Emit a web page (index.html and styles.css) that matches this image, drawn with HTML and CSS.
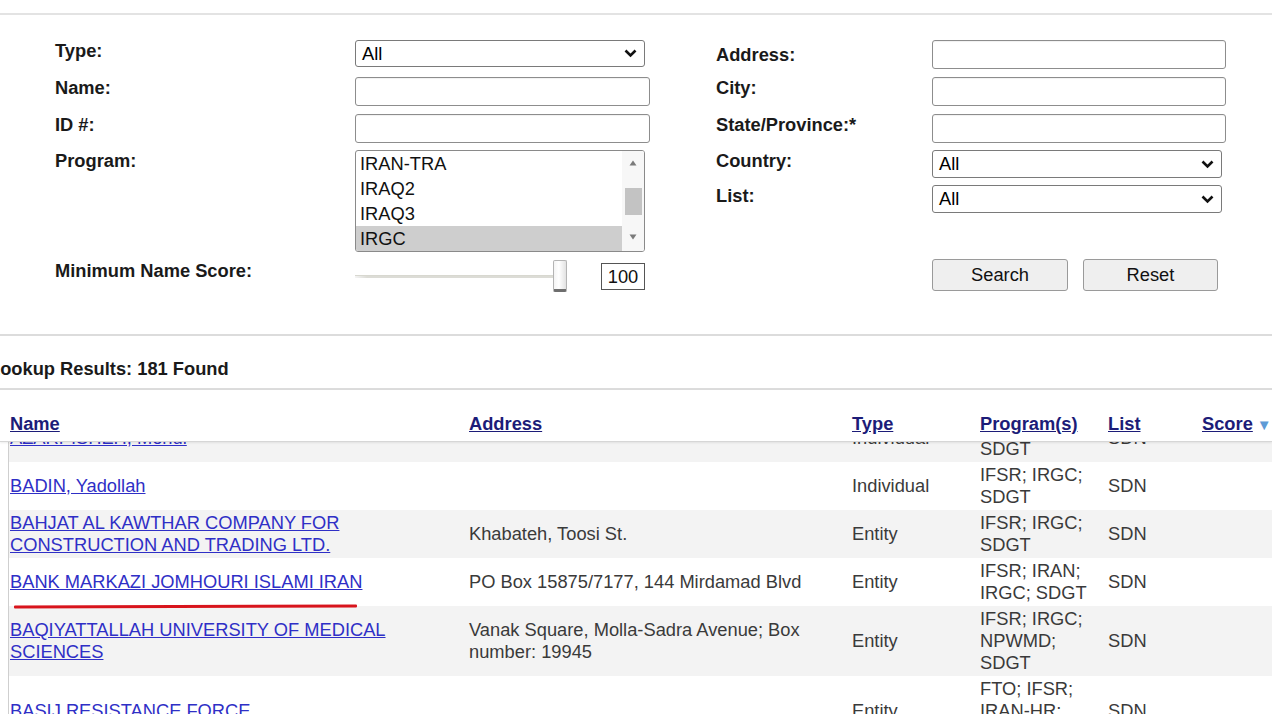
FILE: index.html
```html
<!DOCTYPE html>
<html lang="en">
<head>
<meta charset="utf-8">
<title>Sanctions List Search</title>
<link rel="stylesheet" href="styles.css">
</head>
<body>
<div class="topbar"></div>

<form class="search">
  <div class="col col-left">
    <label class="lbl">Type:</label>
    <div class="select sel-type"><span>All</span><svg class="chev" width="13" height="9" viewBox="0 0 13 9"><polyline points="1.5,1.5 6.5,6.5 11.5,1.5" fill="none" stroke="#111" stroke-width="2.6"/></svg></div>

    <label class="lbl">Name:</label>
    <div class="input"></div>

    <label class="lbl">ID #:</label>
    <div class="input"></div>

    <label class="lbl">Program:</label>
    <div class="listbox">
      <div class="options">
        <div class="opt">IRAN-TRA</div>
        <div class="opt">IRAQ2</div>
        <div class="opt">IRAQ3</div>
        <div class="opt selected">IRGC</div>
      </div>
      <div class="scrollbar">
        <svg class="arrow" width="8" height="6" viewBox="0 0 8 6"><polygon points="4,0.5 7.5,5.5 0.5,5.5" fill="#7b7b7b"/></svg>
        <div class="thumb"></div>
        <svg class="arrow" width="8" height="6" viewBox="0 0 8 6"><polygon points="0.5,0.5 7.5,0.5 4,5.5" fill="#7b7b7b"/></svg>
      </div>
    </div>

    <label class="lbl">Minimum Name Score:</label>
    <div class="score-row">
      <div class="slider">
        <div class="track"></div>
        <div class="knob"></div>
      </div>
      <div class="numbox">100</div>
    </div>
  </div>

  <div class="col col-right">
    <label class="lbl lbl-first">Address:</label>
    <div class="input"></div>

    <label class="lbl">City:</label>
    <div class="input"></div>

    <label class="lbl">State/Province:*</label>
    <div class="input"></div>

    <label class="lbl">Country:</label>
    <div class="select sel-wide"><span>All</span><svg class="chev" width="13" height="9" viewBox="0 0 13 9"><polyline points="1.5,1.5 6.5,6.5 11.5,1.5" fill="none" stroke="#111" stroke-width="2.6"/></svg></div>

    <label class="lbl">List:</label>
    <div class="select sel-wide"><span>All</span><svg class="chev" width="13" height="9" viewBox="0 0 13 9"><polyline points="1.5,1.5 6.5,6.5 11.5,1.5" fill="none" stroke="#111" stroke-width="2.6"/></svg></div>

    <div class="spacer"></div>
    <div></div>

    <div class="buttons">
      <button type="button" class="btn btn-search">Search</button>
      <button type="button" class="btn btn-reset">Reset</button>
    </div>
  </div>
</form>

<h2 class="results-title">Lookup Results: 181 Found</h2>

<div class="thead row-grid">
  <div class="cell"><a href="#">Name</a></div>
  <div class="cell"><a href="#">Address</a></div>
  <div class="cell"><a href="#">Type</a></div>
  <div class="cell"><a href="#">Program(s)</a></div>
  <div class="cell"><a href="#">List</a></div>
  <div class="cell score-head"><a href="#">Score</a><span class="sort">&#9660;</span></div>
</div>

<div class="tbody">
  <div class="rows">
    <div class="row row-grid alt">
      <div class="cell name"><a href="#">AZARPISHEH, Mehdi</a></div>
      <div class="cell addr"></div>
      <div class="cell">Individual</div>
      <div class="cell prog">IFSR; IRGC; SDGT</div>
      <div class="cell">SDN</div>
      <div class="cell"></div>
    </div>
    <div class="row row-grid">
      <div class="cell name"><a href="#">BADIN, Yadollah</a></div>
      <div class="cell addr"></div>
      <div class="cell">Individual</div>
      <div class="cell prog">IFSR; IRGC; SDGT</div>
      <div class="cell">SDN</div>
      <div class="cell"></div>
    </div>
    <div class="row row-grid alt">
      <div class="cell name"><a href="#">BAHJAT AL KAWTHAR COMPANY FOR CONSTRUCTION AND TRADING LTD.</a></div>
      <div class="cell addr">Khabateh, Toosi St.</div>
      <div class="cell">Entity</div>
      <div class="cell prog">IFSR; IRGC; SDGT</div>
      <div class="cell">SDN</div>
      <div class="cell"></div>
    </div>
    <div class="row row-grid">
      <div class="cell name marked"><a href="#">BANK MARKAZI JOMHOURI ISLAMI IRAN</a><span class="redline"></span></div>
      <div class="cell addr">PO Box 15875/7177, 144 Mirdamad Blvd</div>
      <div class="cell">Entity</div>
      <div class="cell prog">IFSR; IRAN; IRGC; SDGT</div>
      <div class="cell">SDN</div>
      <div class="cell"></div>
    </div>
    <div class="row row-grid alt">
      <div class="cell name"><a href="#">BAQIYATTALLAH UNIVERSITY OF MEDICAL SCIENCES</a></div>
      <div class="cell addr">Vanak Square, Molla-Sadra Avenue; Box number: 19945</div>
      <div class="cell">Entity</div>
      <div class="cell prog">IFSR; IRGC; NPWMD; SDGT</div>
      <div class="cell">SDN</div>
      <div class="cell"></div>
    </div>
    <div class="row row-grid">
      <div class="cell name"><a href="#">BASIJ RESISTANCE FORCE</a></div>
      <div class="cell addr"></div>
      <div class="cell">Entity</div>
      <div class="cell prog">FTO; IFSR; IRAN-HR; IRGC; SDGT</div>
      <div class="cell">SDN</div>
      <div class="cell"></div>
    </div>
  </div>
</div>
</body>
</html>
```

FILE: styles.css
```css
* { box-sizing: border-box; }

html, body {
  margin: 0;
  padding: 0;
  background: #fff;
  overflow: hidden;
}

body {
  width: 1272px;
  height: 714px;
  font-family: "Liberation Sans", Arial, sans-serif;
  font-size: 18.3px;
  line-height: 22px;
  color: #222;
}

.topbar {
  height: 15px;
  border-bottom: 2px solid #e3e3e3;
}

/* ---------- search form ---------- */
.search {
  display: flex;
  height: 321px;
  padding: 25px 0 0 55px;
  border-bottom: 2px solid #dcdcdc;
}

.col {
  display: grid;
  row-gap: 8px;
  align-items: start;
}

.col-left {
  grid-template-columns: 300px 295px;
  grid-template-rows: 29px 29px 28px 102px 32px;
  width: 595px;
}

.col-right {
  margin-left: 66px;
  grid-template-columns: 216px 294px;
  grid-template-rows: 29px 29px 28px 27px 27px 31px 32px;
}

.lbl {
  font-weight: bold;
  color: #1a1a1a;
  line-height: 22px;
}

.lbl-first { margin-top: 4px; }

.spacer { height: 1px; }

.input {
  width: 295px;
  height: 29px;
  border: 1px solid #8d8d8d;
  border-radius: 3px;
  background: #fff;
  box-shadow: inset 0 1px 1px rgba(0,0,0,0.06);
}

.col-right .input { width: 294px; }

.select {
  display: flex;
  align-items: center;
  justify-content: space-between;
  height: 27px;
  padding: 0 7px 0 6px;
  border: 1px solid #7a7a7a;
  border-radius: 3px;
  background: #fff;
  color: #000;
}

.sel-type { width: 290px; }
.sel-wide { width: 290px; height: 28px; }

.chev { display: block; }

.listbox {
  display: flex;
  width: 290px;
  height: 102px;
  border: 1px solid #8a8a8a;
  border-radius: 3px;
  overflow: hidden;
  background: #fff;
}

.options {
  flex: 1;
}

.opt {
  height: 25px;
  line-height: 25px;
  padding-left: 4px;
  color: #111;
}

.opt.selected { background: #cecece; }

.scrollbar {
  width: 22px;
  display: flex;
  flex-direction: column;
  align-items: center;
  background: #f7f7f7;
  padding-top: 9px;
}

.scrollbar .arrow { display: block; }

.thumb {
  width: 17px;
  height: 27px;
  margin: 22px 0 19px;
  background: #c3c3c3;
}

.score-row {
  display: flex;
  align-items: center;
  height: 32px;
}

.slider {
  position: relative;
  width: 212px;
  height: 32px;
  display: flex;
  align-items: center;
}

.track {
  width: 205px;
  height: 3px;
  background: linear-gradient(to right, #f4f4f4, #dcdcd6 12px);
  border-top: 1px solid #d8d8d0;
}

.knob {
  position: absolute;
  left: 198px;
  top: 0;
  width: 14px;
  height: 32px;
  border: 1px solid #b4b4b4;
  border-bottom: 3px solid #6e6e6e;
  border-radius: 2px;
  background: linear-gradient(to right, #f4f4f4, #ffffff 40%, #e2e2e2);
}

.numbox {
  margin-left: 34px;
  width: 44px;
  height: 27px;
  border: 1px solid #555;
  text-align: center;
  line-height: 25px;
  color: #111;
}

.buttons {
  grid-column: 2;
  display: flex;
  gap: 15px;
}

.btn {
  font-family: inherit;
  font-size: 18.3px;
  color: #111;
  height: 32px;
  border: 1px solid #9a9a9a;
  border-radius: 3px;
  background: #efefef;
  padding: 0;
}

.btn-search { width: 136px; }
.btn-reset { width: 135px; }

/* ---------- results ---------- */
.results-title {
  margin: 0 0 0 -11px;
  height: 54px;
  padding-top: 22px;
  font-size: 18.3px;
  line-height: 22px;
  font-weight: bold;
  color: #1a1a1a;
  border-bottom: 2px solid #dcdcdc;
}

.row-grid {
  display: grid;
  grid-template-columns: 459px 383px 128px 128px 94px 1fr;
}

.thead {
  height: 52px;
  padding: 23px 0 0 9px;
  border-bottom: 1px solid #d6d6d6;
  box-shadow: 0 1px 2px rgba(0,0,0,0.08);
  position: relative;
}

.thead .cell { padding-left: 1px; }

.score-head { white-space: nowrap; }

.thead a {
  color: #1c1c78;
  font-weight: bold;
  text-decoration: underline;
}

.sort {
  color: #5e9bd6;
  font-size: 15px;
  margin-left: 4px;
}

.tbody {
  margin-left: 8px;
  height: 273px;
  overflow: hidden;
  border-left: 1px solid #cfcfcf;
}

.rows { margin-top: -28px; }

.row {
  align-items: center;
  padding: 2px 0;
  color: #3a3a3a;
  background: #fff;
}

.row.alt { background: #f3f3f3; }

.row .cell { padding-left: 1px; }

.row .name { padding-right: 22px; }
.row .addr { padding-right: 30px; }
.row .prog { padding-right: 8px; }

.row a {
  color: #2f2fc6;
  text-decoration: underline;
}

.marked { position: relative; }

.redline {
  position: absolute;
  left: 5px;
  top: 34px;
  width: 343px;
  height: 3px;
  background: #d8141c;
  border-radius: 1px;
  transform: rotate(-0.15deg);
}
```
